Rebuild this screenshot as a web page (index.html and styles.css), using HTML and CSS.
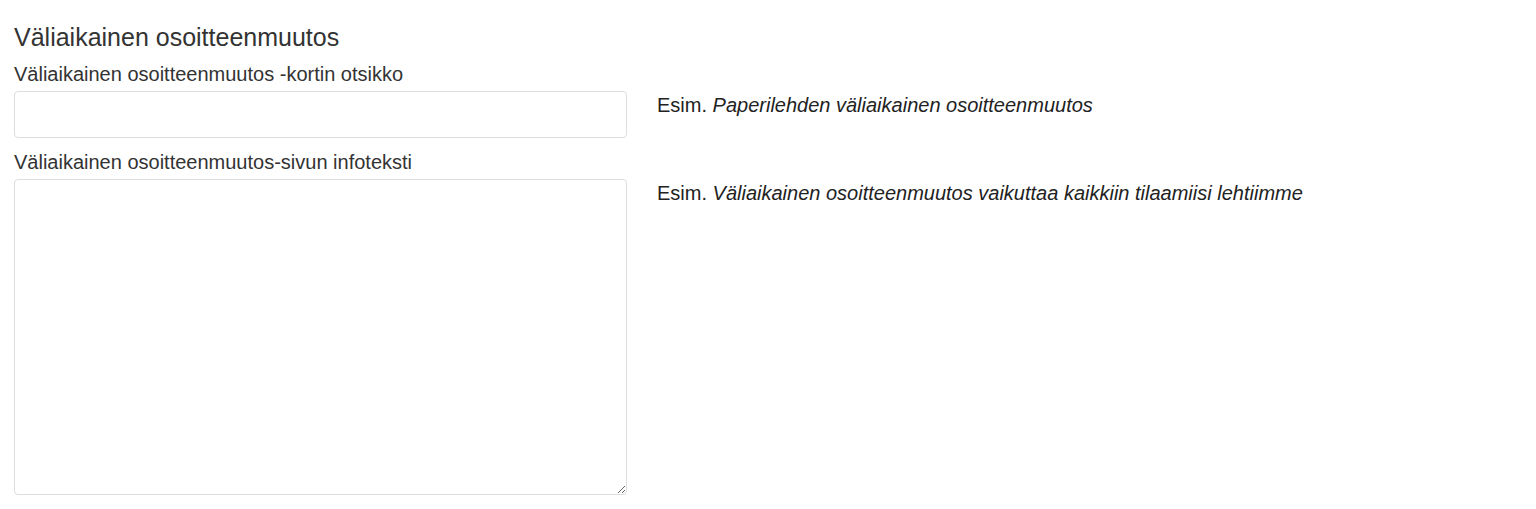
FILE: index.html
```html
<!DOCTYPE html>
<html lang="fi">
<head>
<meta charset="utf-8">
<title>Väliaikainen osoitteenmuutos</title>
<link rel="stylesheet" href="styles.css">
</head>
<body>
<section class="panel">
  <h3 class="panel-title">Väliaikainen osoitteenmuutos</h3>
  <div class="field">
    <label class="field-label" for="title">Väliaikainen osoitteenmuutos -kortin otsikko</label>
    <div class="field-row">
      <input class="field-input" id="title" type="text">
      <p class="field-help">Esim. <em>Paperilehden väliaikainen osoitteenmuutos</em></p>
    </div>
  </div>
  <div class="field">
    <label class="field-label" for="info">Väliaikainen osoitteenmuutos-sivun infoteksti</label>
    <div class="field-row">
      <textarea class="field-textarea" id="info"></textarea>
      <p class="field-help">Esim. <em>Väliaikainen osoitteenmuutos vaikuttaa kaikkiin tilaamiisi lehtiimme</em></p>
    </div>
  </div>
</section>
</body>
</html>
```
FILE: styles.css
```css
html, body {
  margin: 0;
  padding: 0;
  background: #fff;
}
body {
  font-family: "Liberation Sans", Arial, sans-serif;
  color: #333;
  font-size: 20px;
}
.panel {
  padding: 24px 0 0 14px;
}
.panel-title {
  margin: 0 0 10px 0;
  font-size: 25px;
  font-weight: normal;
  line-height: 26px;
}
.field-label {
  display: block;
  font-size: 20px;
  line-height: 28px;
  margin-bottom: 3px;
}
.field-row {
  display: flex;
  align-items: flex-start;
  gap: 30px;
}
.field-input,
.field-textarea {
  box-sizing: border-box;
  width: 613px;
  flex: none;
  border: 1px solid #ddd;
  border-radius: 4px;
  background: #fff;
  font: inherit;
  margin: 0;
  padding: 6px 12px;
}
.field-input {
  height: 47px;
}
.field-textarea {
  height: 316px;
  resize: vertical;
}
.field-help {
  margin: 0;
  font-size: 20px;
  line-height: 28px;
  color: #222;
}
.field-help em {
  font-style: italic;
}
.field + .field {
  margin-top: 10px;
}
```
